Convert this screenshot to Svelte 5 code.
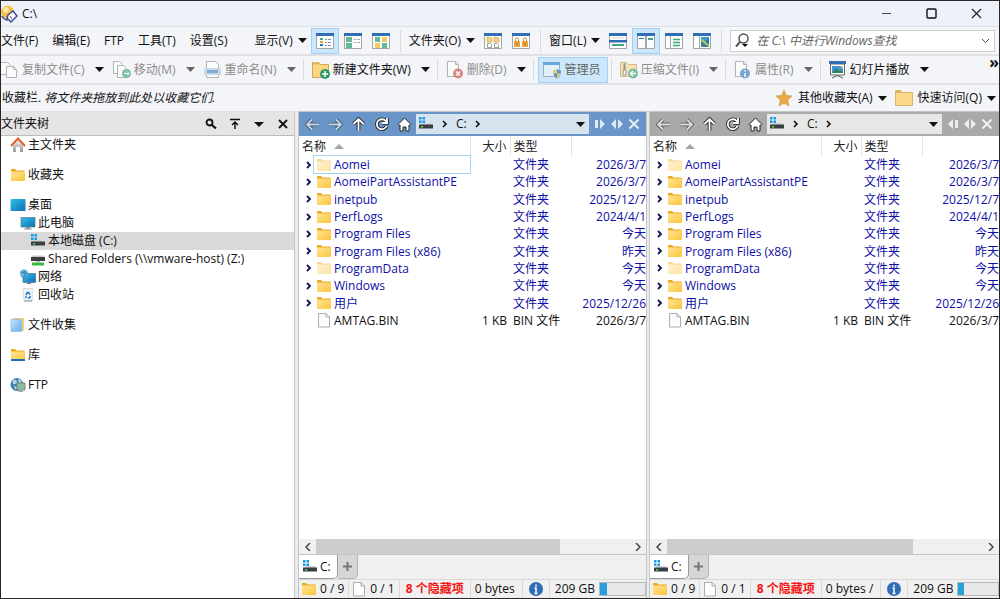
<script>
  const menus = ["文件(F)", "编辑(E)", "FTP", "工具(T)", "设置(S)"];

  const tree = [
    { label: "主文件夹", icon: "home-color", level: 0 },
    { label: "收藏夹", icon: "folder", level: 0, gap: true },
    { label: "桌面", icon: "desktop", level: 0, gap: true },
    { label: "此电脑", icon: "pc", level: 1 },
    { label: "本地磁盘 (C:)", icon: "drive", level: 2 },
    { label: "Shared Folders (\\\\vmware-host) (Z:)", icon: "netdrive", level: 2 },
    { label: "网络", icon: "network", level: 1 },
    { label: "回收站", icon: "recycle", level: 1 },
    { label: "文件收集", icon: "collection", level: 0, gap: true },
    { label: "库", icon: "library", level: 0, gap: true },
    { label: "FTP", icon: "globe", level: 0, gap: true },
  ];

  const files = [
    { name: "Aomei", date: "2026/3/7", hidden: true },
    { name: "AomeiPartAssistantPE", date: "2026/3/7" },
    { name: "inetpub", date: "2025/12/7" },
    { name: "PerfLogs", date: "2024/4/1" },
    { name: "Program Files", date: "今天" },
    { name: "Program Files (x86)", date: "昨天" },
    { name: "ProgramData", date: "今天", hidden: true },
    { name: "Windows", date: "今天" },
    { name: "用户", date: "2025/12/26" },
    { name: "AMTAG.BIN", date: "2026/3/7", size: "1 KB", type: "BIN 文件", file: true },
  ];

  const panes = [
    { id: "left", bytes: "0 bytes" },
    { id: "right", bytes: "0 bytes /" },
  ];

  let selected = $state("本地磁盘 (C:)");
  let active = $state("left");
  let query = $state("");
</script>

{#snippet caret()}
  <svg class="caret" width="9" height="5" viewBox="0 0 9 5"><path d="M0 0h9L4.500 5z" fill="currentColor" /></svg>
{/snippet}

{#snippet frame()}
  <path d="M.5 2.500h17v13H.5z" fill="#fdfdfd" stroke="#a3a6a9" />
  <path d="M0 0h18v3H0z" fill="#2f6db4" />
{/snippet}

{#snippet viewIcon(name)}
  <svg width="18" height="16" viewBox="0 0 18 16">
    {@render frame()}
    {#if name === "details"}
      <path d="M4 5h3v2H4z" fill="#45a882" /><path d="M4 8h3v2H4z" fill="#e8a33c" /><path d="M4 11h3v2H4z" fill="#2f6db4" />
      <path d="M9 6.500h2m1 0h3M9 9.500h2m1 0h3M9 12.500h2m1 0h3" stroke="#8b8f93" />
    {:else if name === "list"}
      <path d="M2 4h6v5H2zM2 10h6v5H2z" fill="#63b896" />
      <path d="M10 6.500h2m1 0h3M10 9.500h2m1 0h3" stroke="#a3a6a9" />
    {:else if name === "tiles"}
      <path d="M3 4h5v5H3zM10 10h5v5h-5z" fill="#63b896" /><path d="M10 4h5v5h-5zM3 10h5v5H3z" fill="#f5c861" />
    {:else if name === "folders"}
      <path d="M3 4h2l1 1h2v4H3zM10 4h2l1 1h2v4h-5z" fill="#f5d183" stroke="#c99b45" stroke-width=".6" />
      <path d="M3.500 10.500h3l1 1v3h-4zM10.500 10.500h3l1 1v3h-4z" fill="#fff" stroke="#888" stroke-width=".8" />
    {:else if name === "locks"}
      <path d="M2 8h6v6H2zM10 8h6v6h-6z" fill="#e8a33c" />
      <path d="M3.500 8V6.500q0-1.500 1.500-1.500t1.500 1.500V8M11.500 8V6.500q0-1.500 1.500-1.500t1.500 1.500V8" fill="none" stroke="#b98a3f" />
      <path d="M5 10v2M13 10v2" stroke="#8e6420" />
    {:else if name === "horizontal"}
      <path d="M0 7h18v2.500H0z" fill="#2f6db4" /><path d="M3 5h12" stroke="#d4d7da" /><path d="M3 11h12v2H3z" fill="#3fa67d" />
    {:else if name === "vertical"}
      <path d="M9 3v12" stroke="#a3a6a9" stroke-width="2" /><path d="M2 5h5v1H2z" fill="#2f6db4" /><path d="M11 5h5v2h-5z" fill="#3fa67d" />
    {:else if name === "tree"}
      <path d="M5.500 3v12" stroke="#a3a6a9" /><path d="M8 6.500h7M8 9.500h7M8 12.500h7" stroke="#3fa67d" stroke-width="1.500" />
    {:else}
      <path d="M6.500 3v12" stroke="#a3a6a9" /><path d="M8 4h8v10H8z" fill="#2f6db4" />
      <path d="M8 8V4h8l-3 4z" fill="#3d9bd8" /><path d="M8 14V9l3-3 5 6v2z" fill="#3d7f8f" /><path d="m8 8 2-2 6 6v2z" fill="#9fce62" />
    {/if}
  </svg>
{/snippet}

{#snippet toolIcon(name)}
  <svg width="18" height="18" viewBox="0 0 18 18">
    {#if name === "copy"}
      <path d="M-.5 1.500h7l3 3v9h-10z" fill="#fff" stroke="#888" />
      <path d="M5.500 5.500h7l3 3v8h-10z" fill="#fff" stroke="#888" /><path d="M12.500 5.500v3h3" fill="none" stroke="#888" />
    {:else if name === "move"}
      <path d="M.5.500h6l3 3v9h-9z" fill="#fff" stroke="#888" />
      <path d="M4.500 4.500h6l3 3v9h-9z" fill="#fff" stroke="#888" />
      <circle cx="13.500" cy="12.500" r="4.500" fill="#2f9a68" /><path d="M11 12.500h5m-2-2 2 2-2 2" fill="none" stroke="#fff" />
    {:else if name === "rename"}
      <path d="M2.500.500h9l3 3v13h-12z" fill="#fff" stroke="#888" /><rect y="7" width="17" height="7" rx="1" fill="#a9c4de" />
      <path d="M3 9h11v3H3z" fill="#3978b4" />
    {:else if name === "newfolder"}
      <path d="M.5 1.500h6l2 2h8v13H.5z" fill="#fbd77f" stroke="#d0a550" />
      <path d="M1 1h5.500l1.500 2.500H1z" fill="#e6b65a" />
      <circle cx="13" cy="13" r="5" fill="#2f9a68" /><path d="M10 13h6m-3-3v6" stroke="#fff" stroke-width="1.500" />
    {:else if name === "delete"}
      <path d="M1.500.500h8l3 3v12h-11z" fill="#fff" stroke="#888" /><path d="M9.500.500v3h3" fill="none" stroke="#888" />
      <circle cx="12" cy="12.500" r="5" fill="#cd3c3a" /><path d="m10 10.500 4 4m0-4-4 4" stroke="#fff" stroke-width="1.500" />
    {:else if name === "admin"}
      <path d="M.5 1.500h16v14H.5z" fill="#e2f1fb" stroke="#9eb0bd" /><path d="M0 1h17v3H0z" fill="#6ba7d8" />
      <path d="M14 8q2 1.500 4 1.500 0 6-4 8-4-2-4-8 2 0 4-1.500" fill="#5a93cb" />
      <path d="M14 8v4.500h-4V9.500q2 0 4-1.500M14 12.500h3.500q-1 3.500-3.500 5z" fill="#e9cb78" />
    {:else if name === "zip"}
      <path d="M.5 1.500h6l2 2h8v12H.5z" fill="#fbd77f" stroke="#b99550" />
      <path d="M4.500 2v8M3 4h3M3 6h3M3 8h3" stroke="#555" /><path d="M3 9h3v5H3z" fill="#fff" stroke="#555" />
      <circle cx="13" cy="12.500" r="5" fill="#2f9a68" /><path d="M16 12.500h-5.500m2.500-2.500-2.500 2.500 2.500 2.500" fill="none" stroke="#fff" stroke-width="1.500" />
    {:else if name === "props"}
      <path d="M1.500.500h8l3 3v12h-11z" fill="#fff" stroke="#888" /><path d="M9.500.500v3h3" fill="none" stroke="#888" />
      <circle cx="11" cy="12.500" r="5" fill="#2f6db4" /><path d="M11 9v1.500M11 12v4" stroke="#fff" stroke-width="1.500" />
    {:else if name === "slides"}
      <path d="M1.500 3h14v11h-14z" fill="#fff" stroke="#666" /><path d="M0 0h17v3H0z" fill="#2f6db4" />
      <path d="M3 5h11v7H3z" fill="#3d94d8" /><path d="m3 12 4-5 3 3 2-1 2 2v1z" fill="#348552" /><path d="M11 5h3v3z" fill="#b9d96b" />
      <path d="m3 17 5.500-2.500L14 17" fill="none" stroke="#555" />
    {:else if name === "star"}
      <path d="m9 1 2.400 5.400 5.600.600-4.200 3.900L14 17l-5-3-5 3 1.200-6.100L1 7l5.600-.600z" fill="#e8a845" stroke="#d09440" stroke-width=".6" />
    {:else}
      <path d="M.5 1.500h5l2 2h10v13H.5z" fill="#fbd98a" stroke="#dcb266" /><path d="M1 2h4.500l1.500 2H1z" fill="#e3b059" />
    {/if}
  </svg>
{/snippet}

{#snippet icon(name)}
  <svg width="16" height="16" viewBox="0 0 16 16">
    {#if name === "folder" || name === "folder-hidden" || name === "library"}
      <g opacity={name === "folder-hidden" ? 0.45 : 1}>
        <path d="M1 3q0-1 .700-1H5l1.500 1.500H14q.7 0 .7.700V13.500H1z" fill="#eba91f" />
        <path d="M1 4.500h13.700v9.500H1z" fill="url(#folder)" />
      </g>
      {#if name === "library"}<path d="M1 12h14v2H1z" fill="#1c6fbf" />{/if}
    {:else if name === "home-color"}
      <path d="M3 8l5-5 5 5v7h-3v-5H6v5H3z" fill="url(#gray)" />
      <path d="M1 9l7-7.500L15 9" fill="none" stroke="#e2602b" stroke-width="2" />
    {:else if name === "desktop"}
      <rect x=".5" y="2" width="15" height="12" rx="1" fill="url(#screen)" />
    {:else if name === "pc"}
      <rect x="1" y="2.500" width="14" height="9.500" fill="url(#screen)" stroke="#55798d" stroke-width=".7" />
      <path d="M6 12h4v1.500h2v1H4v-1h2z" fill="#8b979e" />
    {:else if name === "drive"}
      <path d="M2 9l1.500-2h9L14.500 9z" fill="#d0d3d5" />
      <path d="M1 8.500h14v4H1z" fill="#3b3d3f" /><path d="M3 10h2v1.500H3z" fill="#5bd85b" />
      <path d="M1 1h2.500v2.500H1zM4.500 1H7v2.500H4.500zM1 4.500h2.500V7H1zM4.500 4.500H7V7H4.500z" fill="#159be6" />
    {:else if name === "netdrive"}
      <path d="M2 6l1-1.500h10L14 6z" fill="#c4c7c9" /><path d="M1 6h14v4H1z" fill="#3b3d3f" />
      <path d="M2 11.500h12v3H2z" fill="#31ba42" /><path d="M6 10h4v2H6z" fill="#b9bec1" />
    {:else if name === "network"}
      <path d="M3 4.500h12.500v9H3z" fill="url(#screen)" stroke="#3b6a82" stroke-width=".6" /><path d="M7 13.500h4V15H7z" fill="#6e7c84" />
      <circle cx="4" cy="4.500" r="4" fill="#65b5df" /><path d="M1 3q3 0 4 3t-3 2M4 1q-1 3 4 4" fill="none" stroke="#2a78a5" />
    {:else if name === "recycle"}
      <path d="M3 1.500h10l-1 13H4z" fill="#eff2f3" stroke="#cfd4d6" stroke-width=".8" /><path d="M4 13h8v1.500H4z" fill="#b2b6b8" />
      <path d="M6 8l1.500-2.500h1L10 7.500M10.500 9 9.500 11H8M6.500 11 5.500 9.300" fill="none" stroke="#1a78cc" stroke-width="1.500" />
    {:else if name === "collection"}
      <path d="M3 1h11v13H4z" fill="#f2cf7c" /><path d="M1 2.500h9l1.500 1v11H1z" fill="url(#blue)" stroke="#84b7e2" stroke-width=".7" />
    {:else if name === "globe"}
      <circle cx="7" cy="7.500" r="6.500" fill="#3c80b2" /><path d="M3 3q4-1 4 2t-4 2q-1-2 0-4M8 2q3 0 4 3L9 6zM4 9l3 1-1 3q-2-2-2-4" fill="#b4d4e5" />
      <path d="M7 6h8v7H7z" fill="#86bf9f" stroke="#768b82" /><path d="M9 13.500h4V15H8z" fill="#9ca5a9" />
    {:else if name === "info"}
      <circle cx="8" cy="8" r="7" fill="#2f6db4" /><path d="M8 3.500v2M6.500 7H8v5.500M6.500 12.500h3" fill="none" stroke="#fff" stroke-width="1.500" />
    {:else}
      <path d="M2.500 1.500h7.500l3.500 3.500v10h-11z" fill="#fdfdfd" stroke="#9a9a9a" stroke-width=".8" /><path d="M10 1.500V5h3.500" fill="none" stroke="#9a9a9a" stroke-width=".8" />
    {/if}
  </svg>
{/snippet}

{#snippet navIcon(name)}
  <svg width="15" height="15" viewBox="0 0 15 15" fill="none">
    {#if name === "home"}
      <path d="M7.500 1 14 7.500l-1 1-1-.500v6H9V10H6v4H3V8l-1 .500-1-1z" fill="#fff" stroke="#222" stroke-width="1" />
    {:else}
      {@const d = {
        back: "M14 7.500H2M7 2.500 2 7.500l5 5",
        forward: "M1 7.500h12M8 2.500l5 5-5 5",
        up: "M7.500 14V2M2.500 7l5-5 5 5",
        reload: "M12 4.500A5 5 0 1 0 12.500 9M13 1v5H8",
      }[name]}
      <path {d} class="nav-outline" stroke-width="3.600" />
      <path {d} class="nav-line" stroke-width="1.800" />
    {/if}
  </svg>
{/snippet}

{#snippet tool(name, label, disabled, dim)}
  <div class="tool">
    <button class="tool__main" {disabled}>{@render toolIcon(name)}<span>{label}</span></button>
    <button class="tool__drop" class:tool__drop--dim={dim} aria-label={label + " 菜单"}>{@render caret()}</button>
  </div>
{/snippet}

<svg class="defs" width="0" height="0" aria-hidden="true">
  <defs>
    <linearGradient id="folder" x1="0" y1="0" x2="1" y2="1"><stop stop-color="#ffe394" /><stop offset="1" stop-color="#fcc63c" /></linearGradient>
    <linearGradient id="gray" x2="0" y2="1"><stop stop-color="#eee" /><stop offset="1" stop-color="#999" /></linearGradient>
    <linearGradient id="screen" x1="0" y1="0" x2="1" y2="1"><stop stop-color="#2fc3e4" /><stop offset="1" stop-color="#0f6cb8" /></linearGradient>
    <linearGradient id="blue" x1="0" y1="0" x2="1" y2="1"><stop stop-color="#c4e3fa" /><stop offset="1" stop-color="#64b1ef" /></linearGradient>
  </defs>
</svg>

<div class="window">
  <header class="titlebar">
    <svg width="17" height="18" viewBox="0 0 17 18">
      <circle cx="6.500" cy="7" r="6.500" fill="#f3c14b" /><circle cx="5" cy="5" r="3" fill="#fbe3a0" />
      <path d="M7 10l5-4 4 5-6 6-4-4z" fill="#fff" stroke="#45479a" stroke-width="1.500" />
      <path d="M9 11l2 3" stroke="#45479a" /><path d="M1 11q2 4 6 4" fill="none" stroke="#504b88" stroke-width="1.500" />
    </svg>
    <span class="titlebar__text">C:\</span>
    <button class="caption" aria-label="最小化"><svg width="11" height="11" viewBox="0 0 11 11"><path d="M1 5.500h9" stroke="#444" /></svg></button>
    <button class="caption" aria-label="最大化"><svg width="11" height="11" viewBox="0 0 11 11"><rect x="1" y="1" width="9" height="9" rx="1" fill="none" stroke="#111" stroke-width="1.400" /></svg></button>
    <button class="caption" aria-label="关闭"><svg width="11" height="11" viewBox="0 0 11 11"><path d="m1 1 9 9m0-9-9 9" stroke="#222" stroke-width="1.200" /></svg></button>
  </header>

  <div class="bar menubar">
    <nav class="menus">
      {#each menus as menu}
        <button>{menu}</button>
      {/each}
    </nav>
    <button class="menu-drop">显示(V){@render caret()}</button>
    <button class="view view--on" aria-label="详细信息">{@render viewIcon("details")}</button>
    <button class="view" aria-label="列表">{@render viewIcon("list")}</button>
    <button class="view" aria-label="平铺">{@render viewIcon("tiles")}</button>
    <span class="sep"></span>
    <button class="menu-drop">文件夹(O){@render caret()}</button>
    <button class="view" aria-label="文件夹格式">{@render viewIcon("folders")}</button>
    <button class="view" aria-label="锁定格式">{@render viewIcon("locks")}</button>
    <span class="sep"></span>
    <button class="menu-drop">窗口(L){@render caret()}</button>
    <button class="view" aria-label="水平双窗格">{@render viewIcon("horizontal")}</button>
    <button class="view view--on" aria-label="垂直双窗格">{@render viewIcon("vertical")}</button>
    <button class="view" aria-label="文件夹树">{@render viewIcon("tree")}</button>
    <button class="view" aria-label="查看器">{@render viewIcon("viewer")}</button>
    <span class="sep"></span>
    <div class="search">
      <svg width="15" height="15" viewBox="0 0 15 15" fill="none">
        <circle cx="8.500" cy="5.500" r="4.500" stroke="#555" stroke-width="1.500" /><path d="M5 9 1 13.500" stroke="#555" stroke-width="2" /><path d="M7 11h6l-3 3z" fill="#111" />
      </svg>
      <input type="text" aria-label="查找" placeholder="在 C:\ 中进行Windows查找" bind:value={query} />
      <button aria-label="查找历史"><svg width="9" height="6" viewBox="0 0 9 6"><path d="m1 1 3.500 3.500L8 1" fill="none" stroke="#555" /></svg></button>
    </div>
  </div>

  <div class="bar toolbar">
    {@render tool("copy", "复制文件(C)", true, false)}
    {@render tool("move", "移动(M)", true, true)}
    {@render tool("rename", "重命名(N)", true, true)}
    <span class="sep"></span>
    {@render tool("newfolder", "新建文件夹(W)", false, false)}
    <span class="sep"></span>
    {@render tool("delete", "删除(D)", true, false)}
    <span class="sep"></span>
    <button class="admin">{@render toolIcon("admin")}管理员</button>
    <span class="sep"></span>
    {@render tool("zip", "压缩文件(I)", true, true)}
    <span class="sep"></span>
    {@render tool("props", "属性(R)", true, true)}
    <span class="sep"></span>
    {@render tool("slides", "幻灯片播放", false, false)}
    <button class="more" aria-label="更多">»</button>
  </div>

  <div class="bar favorites">
    <p>收藏栏. <em>将文件夹拖放到此处以收藏它们.</em></p>
    <button class="fav">{@render toolIcon("star")}<span>其他收藏夹(A)</span>{@render caret()}</button>
    <button class="fav">{@render toolIcon("folder")}<span>快速访问(Q)</span>{@render caret()}</button>
  </div>

  <main class="main">
    <aside class="sidebar">
      <div class="sidebar__head">
        <h2>文件夹树</h2>
        <button aria-label="查找"><svg width="12" height="12" viewBox="0 0 12 12"><circle cx="4.500" cy="4.500" r="3" fill="none" stroke="#111" stroke-width="1.800" /><path d="m7 7 4 3.500" stroke="#111" stroke-width="2.200" /></svg></button>
        <button aria-label="上级"><svg width="12" height="12" viewBox="0 0 12 12"><path d="M1 1.500h10M6 11V4M3 7l3-3 3 3" fill="none" stroke="#111" stroke-width="1.500" /></svg></button>
        <button aria-label="菜单"><svg width="12" height="12" viewBox="0 0 12 12"><path d="M1 4h10L6 9z" fill="#111" /></svg></button>
        <button aria-label="关闭"><svg width="12" height="12" viewBox="0 0 12 12"><path d="m2 2 8 8m0-8-8 8" stroke="#111" stroke-width="1.800" /></svg></button>
      </div>
      <ul class="tree">
        {#each tree as node}
          <li class="tree__item level-{node.level}" class:tree__item--gap={node.gap}>
            <button class:selected={selected === node.label} onclick={() => (selected = node.label)}>
              {@render icon(node.icon)}{node.label}
            </button>
          </li>
        {/each}
      </ul>
    </aside>

    {#each panes as pane}
      <section class="pane" class:pane--active={active === pane.id}>
        <div class="pane__nav">
          <button class="nav-btn nav-btn--off" aria-label="后退">{@render navIcon("back")}</button>
          <button class="nav-btn nav-btn--off" aria-label="前进">{@render navIcon("forward")}</button>
          <button class="nav-btn" aria-label="上一级">{@render navIcon("up")}</button>
          <button class="nav-btn" aria-label="刷新">{@render navIcon("reload")}</button>
          <button class="nav-btn" aria-label="主页">{@render navIcon("home")}</button>
          <div class="address">
            {@render icon("drive")}
            <svg width="6" height="8" viewBox="0 0 6 8"><path d="m1 1 3 3-3 3" fill="none" stroke="#111" stroke-width="1.600" /></svg>
            <button>C:</button>
            <svg width="6" height="8" viewBox="0 0 6 8"><path d="m1 1 3 3-3 3" fill="none" stroke="#111" stroke-width="1.600" /></svg>
            <button class="address__drop" aria-label="历史">{@render caret()}</button>
          </div>
          <button class="dual" aria-label="复制到另一窗格">
            <svg width="12" height="12" viewBox="0 0 12 12" fill="#fff" opacity=".8">
              {#if pane.id === "left"}<path d="M1 2h3v8H1zM6 1l5 5-5 5z" />{:else}<path d="M8 2h3v8H8zM6 1 1 6l5 5z" />{/if}
            </svg>
          </button>
          <button class="dual" aria-label="交换窗格"><svg width="12" height="12" viewBox="0 0 12 12" fill="#fff" opacity=".8"><path d="M5 1v10L0 6zM7 1v10l5-5z" /></svg></button>
          <button class="dual" aria-label="关闭窗格"><svg width="12" height="12" viewBox="0 0 12 12" opacity=".85"><path d="m1.500 1.500 9 9m0-9-9 9" stroke="#fff" stroke-width="2" /></svg></button>
        </div>

        <div class="list">
          <table>
            <colgroup><col class="c-name" /><col class="c-size" /><col class="c-type" /><col /></colgroup>
            <thead>
              <tr>
                <th><span class="th-sorted">名称<svg width="10" height="5" viewBox="0 0 10 5"><path d="M5 0l5 5H0z" fill="#a6a6a6" /></svg></span></th>
                <th class="right">大小</th>
                <th>类型</th>
                <th aria-label="修改日期"></th>
              </tr>
            </thead>
            <tbody>
              {#each files as file, i}
                <tr class:is-file={file.file}>
                  <td class="name">
                    <div class="name__row">
                      <svg class="expand" width="6" height="8" viewBox="0 0 6 8">
                        {#if !file.file}<path d="m1 1 3 3-3 3" fill="none" stroke="#11115c" stroke-width="1.800" />{/if}
                      </svg>
                      <span class="name__label" class:focused={i === 0 && pane.id === "left"}>
                        {@render icon(file.file ? "file" : file.hidden ? "folder-hidden" : "folder")}{file.name}
                      </span>
                    </div>
                  </td>
                  <td class="right">{file.size ?? ""}</td>
                  <td>{file.type ?? "文件夹"}</td>
                  <td class="date">{file.date}</td>
                </tr>
              {/each}
            </tbody>
          </table>
        </div>

        <div class="scroll">
          <button aria-label="向左滚动"><svg width="6" height="8" viewBox="0 0 6 8"><path d="M5 0 1 4l4 4" fill="none" stroke="#444" stroke-width="1.500" /></svg></button>
          <div class="scroll__track"><div class="scroll__thumb"></div></div>
          <button aria-label="向右滚动"><svg width="6" height="8" viewBox="0 0 6 8"><path d="m1 0 4 4-4 4" fill="none" stroke="#444" stroke-width="1.500" /></svg></button>
        </div>

        <div class="tabs">
          <button class="tab">{@render icon("drive")}C:</button>
          <button class="tab tab--add" aria-label="新标签"><svg width="9" height="9" viewBox="0 0 9 9"><path d="M4.500 0v9M0 4.500h9" stroke="#777" stroke-width="2" /></svg></button>
        </div>

        <footer class="status">
          <span class="status__cell">{@render icon("folder")}0 / 9</span>
          <span class="status__cell">{@render icon("file")}0 / 1</span>
          <span class="status__cell status__cell--hidden">8 个隐藏项</span>
          <span class="status__cell status__cell--bytes">{pane.bytes}</span>
          <span class="status__cell status__cell--info">{@render icon("info")}</span>
          <span class="status__disk">209 GB<span class="meter"><span class="meter__fill"></span></span></span>
        </footer>
      </section>
    {/each}
  </main>
</div>

<style>
  :global(body) {
    margin: 0;
  }

  .defs {
    position: absolute;
  }

  .window {
    box-sizing: border-box;
    display: flex;
    flex-direction: column;
    height: 100vh;
    border: 1px solid #2b2629;
    overflow: hidden;
    background: #f4f5f8;
    color: #111;
    font: 12px/18px "Open Sans", "Noto Sans CJK SC", sans-serif;
    white-space: nowrap;
  }

  .window :global(svg) {
    flex: none;
    display: block;
  }

  button {
    display: flex;
    align-items: center;
    padding: 0;
    border: 0;
    background: none;
    color: inherit;
    font: inherit;
    white-space: nowrap;
  }

  .titlebar {
    display: flex;
    align-items: center;
    height: 25px;
    background: #edf2fa;
    border-bottom: 1px solid #dddfe3;
  }

  .titlebar__text {
    flex: 1;
    padding-left: 4px;
  }

  .caption {
    justify-content: center;
    width: 45px;
    height: 24px;
  }

  .bar {
    display: flex;
    align-items: center;
    flex: none;
    height: 27px;
    border-bottom: 2px solid #e0e1e4;
  }

  .menus {
    display: flex;
    gap: 14px;
    padding-right: 27px;
  }

  .menu-drop {
    gap: 5px;
    margin-right: 4px;
  }

  .view {
    box-sizing: border-box;
    justify-content: center;
    width: 28px;
    height: 26px;
    border: 1px solid transparent;
  }

  .view--on,
  .admin {
    background: #cce6fb;
    border: 1px solid #9fd0f5;
  }

  .sep {
    flex: none;
    width: 1px;
    height: 22px;
    margin: 0 8px 0 7px;
    background: #d9dbde;
  }

  .menubar .sep {
    margin-left: 5px;
  }

  .search {
    display: flex;
    align-items: center;
    flex: 1;
    min-width: 0;
    box-sizing: border-box;
    height: 22px;
    margin-right: 4px;
    padding: 0 4px;
    border: 1px solid #cfcfd2;
    background: #fff;
  }

  .search input {
    flex: 1;
    min-width: 0;
    padding: 0 6px;
    border: 0;
    outline: 0;
    background: none;
    font: inherit;
    font-style: italic;
  }

  .search input::placeholder {
    color: #666;
    opacity: 1;
  }

  .tool {
    display: flex;
    align-items: center;
    gap: 10px;
  }

  .tool + .tool {
    margin-left: 9px;
  }

  .tool__main {
    gap: 3px;
  }

  .tool__main:disabled {
    color: #8c8c8c;
  }

  .tool__main:disabled :global(svg) {
    opacity: 0.6;
  }

  .tool__drop--dim {
    color: #666;
  }

  .admin {
    box-sizing: border-box;
    gap: 4px;
    height: 26px;
    margin: 0 -4px;
    padding: 0 6px 0 4px;
    color: #666;
  }

  .more {
    align-self: flex-start;
    margin-left: auto;
    font-size: 16px;
    font-weight: bold;
    line-height: 12px;
  }

  .favorites {
    gap: 8px;
    height: 26px;
    padding-right: 3px;
    border-bottom-width: 1px;
  }

  .favorites p {
    flex: 1;
    margin: 0;
    padding-left: 1px;
  }

  .fav {
    gap: 5px;
  }

  .main {
    display: flex;
    flex: 1;
    min-height: 0;
    gap: 4px;
    background: #ececee;
  }

  .sidebar {
    display: flex;
    flex-direction: column;
    flex: 0 0 293px;
    border-right: 1px solid #c4c4c6;
  }

  .sidebar__head {
    display: flex;
    align-items: center;
    gap: 12px;
    height: 23px;
    padding-right: 5px;
    background: #e5e5e5;
    border-bottom: 1px solid #bcbcbc;
  }

  .sidebar__head h2 {
    flex: 1;
    margin: 0;
    font: inherit;
  }

  .tree {
    flex: 1;
    margin: 0;
    padding: 0;
    list-style: none;
    background: #fff;
  }

  .tree__item--gap {
    margin-top: 12px;
  }

  .tree button {
    gap: 2px;
    width: 100%;
    height: 18px;
    padding-left: 9px;
  }

  .tree .level-1 button {
    padding-left: 19px;
  }

  .tree .level-2 button {
    padding-left: 29px;
  }

  .tree button.selected {
    background: #d9d9d9;
  }

  .pane {
    --bar: #a9a9a9;
    --address: #e7e7e7;
    display: flex;
    flex-direction: column;
    flex: 1;
    min-width: 0;
    box-shadow: 0 0 0 1px #c4c4c6;
  }

  .pane + .pane {
    flex-basis: 2px;
  }

  .pane--active {
    --bar: #6a95c8;
    --address: #d8e3f0;
  }

  .pane__nav {
    display: flex;
    align-items: center;
    height: 24px;
    padding: 0 6px 0 2px;
    background: var(--bar);
  }

  .nav-btn {
    justify-content: center;
    width: 23px;
  }

  .nav-btn--off {
    opacity: 0.6;
  }

  .nav-outline {
    stroke: #222;
  }

  .nav-line {
    stroke: #fff;
  }

  .address {
    display: flex;
    align-items: center;
    gap: 8px;
    flex: 1;
    height: 20px;
    padding: 0 4px 0 2px;
    background: var(--address);
  }

  .address__drop {
    margin-left: auto;
  }

  .dual {
    margin-left: 5px;
  }

  .list {
    flex: 1;
    min-height: 0;
    overflow: hidden;
    background: #fff;
  }

  table {
    table-layout: fixed;
    width: 100%;
    height: 193px;
    border-collapse: collapse;
    color: #0e0ea6;
    line-height: 17px;
  }

  .c-name {
    width: 171px;
  }

  .c-size {
    width: 40px;
  }

  .c-type {
    width: 61px;
  }

  th {
    height: 20px;
    padding: 0 3px;
    border-right: 1px solid #e3e3e3;
    color: #222;
    font-weight: normal;
    text-align: left;
  }

  th:last-child {
    border-right: 0;
  }

  .th-sorted {
    display: flex;
    align-items: center;
    gap: 8px;
  }

  td {
    padding: 0 3px;
  }

  .right,
  .date {
    text-align: right;
  }

  .date {
    padding: 0;
  }

  .is-file {
    color: #111;
  }

  .name {
    padding: 0 0 0 7px;
  }

  .name__row {
    display: flex;
    align-items: center;
    gap: 2px;
  }

  .name__label {
    display: flex;
    align-items: center;
    flex: 1;
    gap: 2px;
    padding-left: 2px;
  }

  .focused {
    outline: 1px solid #a8d4f2;
  }

  .scroll {
    display: flex;
    height: 15px;
    background: #f0f0f0;
    border-bottom: 1px solid #c4c4c4;
  }

  .scroll button {
    justify-content: center;
    width: 17px;
  }

  .scroll__track {
    flex: 1;
  }

  .scroll__thumb {
    width: 78%;
    height: 100%;
    background: #cdcdcd;
  }

  .tabs {
    display: flex;
    height: 24px;
    background: #f0f0f0;
  }

  .tab {
    padding: 0 6px 0 3px;
    gap: 2px;
    background: #fff;
    border-right: 1px solid #999;
    border-bottom: 1px solid #999;
    border-radius: 0 0 5px 0;
  }

  .tab--add {
    padding: 0 5px;
    background: #d6d6d6;
    border-color: #b5b5b5;
  }

  .status {
    display: flex;
    align-items: center;
    height: 18px;
    background: #f0f0f0;
    border-top: 1px solid #d9d9d9;
  }

  .status__cell {
    display: flex;
    align-items: center;
    gap: 3px;
    height: 18px;
    padding: 0 4px 0 2px;
    border-right: 1px solid #d9d9d9;
  }

  .status__cell--hidden {
    padding: 0 6px;
    color: #f51414;
    font-weight: bold;
  }

  .status__cell--bytes {
    padding: 0 7px 0 4px;
  }

  .status__cell--info {
    padding: 0 5px;
  }

  .status__disk {
    display: flex;
    align-items: center;
    flex: 1;
    gap: 4px;
    padding-left: 5px;
  }

  .meter {
    flex: 1;
    height: 12px;
    border: 1px solid #b9b9b9;
    background: #e8e8e8;
  }

  .meter__fill {
    display: block;
    width: 15%;
    height: 100%;
    background: #26a0da;
  }
</style>
